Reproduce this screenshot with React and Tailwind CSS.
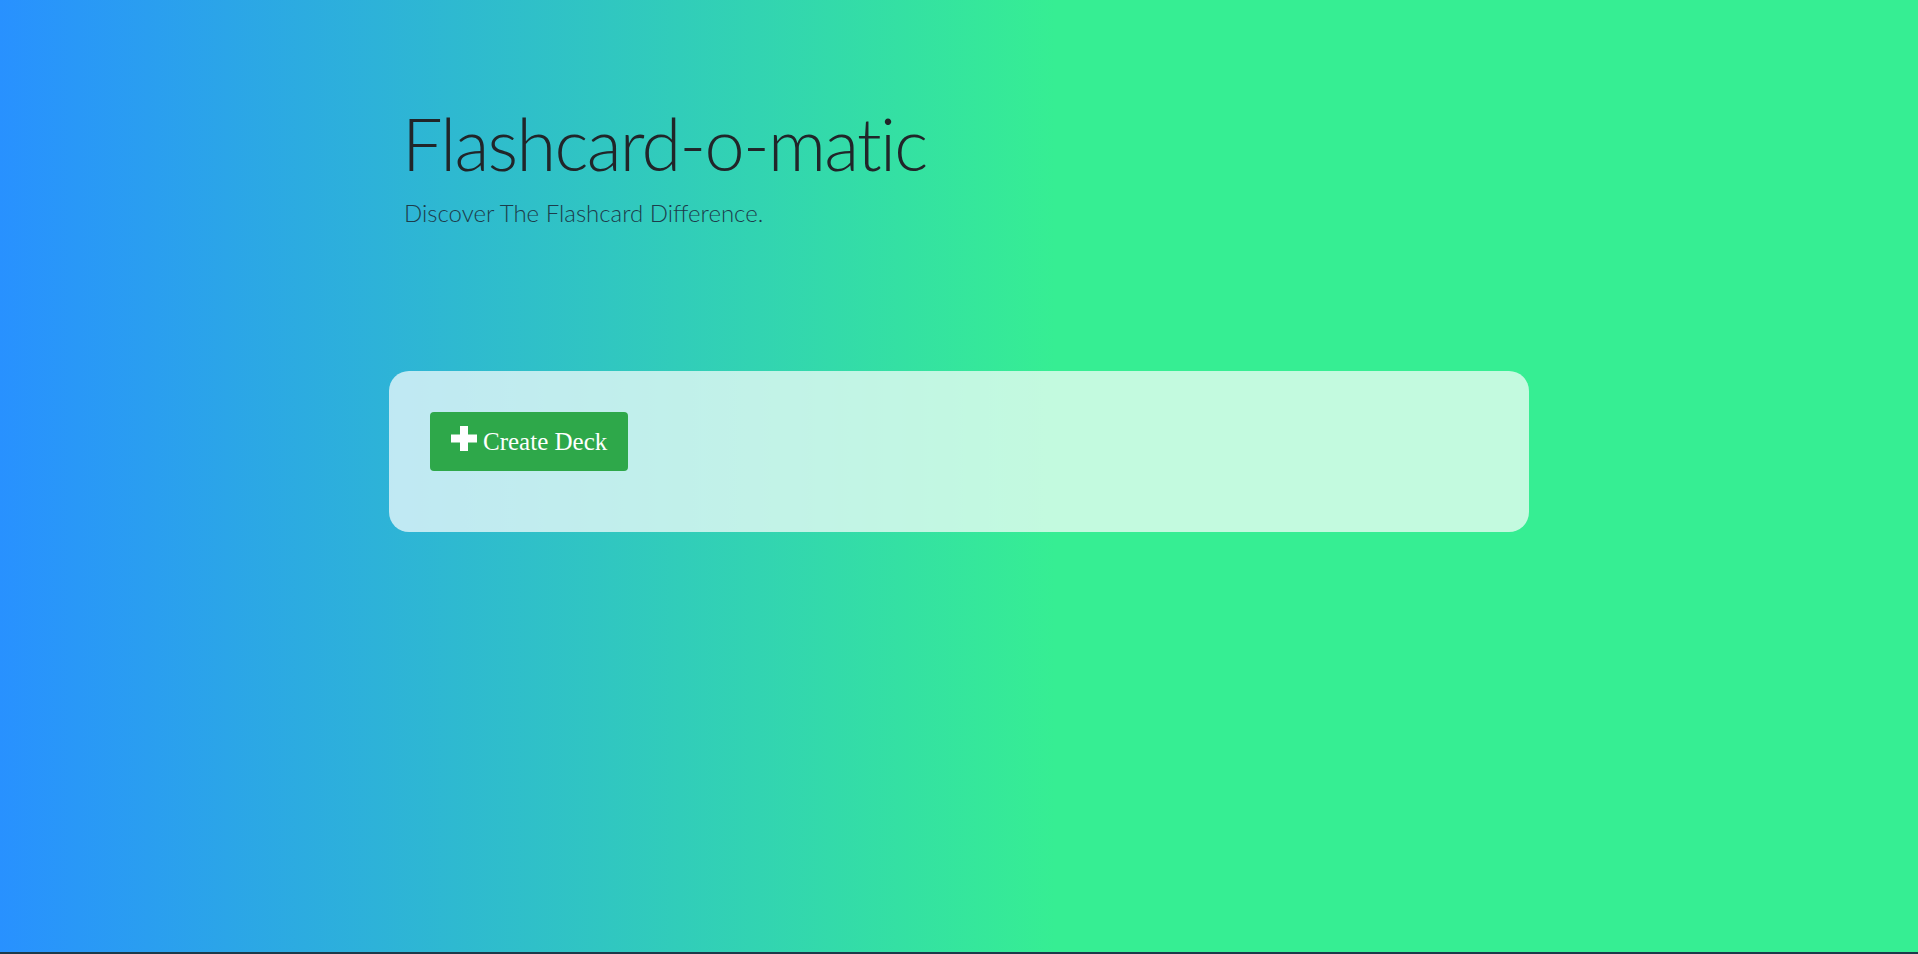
import React from "react";

const PlusIcon = () => (
  <svg width="26" height="25" viewBox="0 0 26 25" className="shrink-0 mb-[6px]">
    <path d="M9 0h8v8.5h9v8h-9V25H9v-8.5H0v-8h9z" fill="#fff" />
  </svg>
);

const Header = () => (
  <header className="w-[1140px] mx-auto px-[15px] pt-[100px]">
    <h1
      className="text-[72px] leading-[1.2] font-light tracking-[-1.7px] -ml-[2px] text-[#212529]"
      style={{ fontFamily: "Lato, sans-serif" }}
    >
      Flashcard-o-matic
    </h1>
    <p
      className="text-[24px] leading-[1.5] font-light text-[#1d3c4b] mt-[9px]"
      style={{ fontFamily: "Lato, sans-serif" }}
    >
      Discover The Flashcard Difference.
    </p>
  </header>
);

export default function App() {
  return (
    <div className="min-h-[954px] flex flex-col bg-[#1c3a4a]">
      <div className="h-[952px] bg-[linear-gradient(to_right,#2891ff_0%,#36ee93_55%,#36ee93_100%)]">
        <Header />
        <main className="w-[1140px] mx-auto mt-[140px] rounded-[20px] bg-white/70 pt-[41px] pb-[61px] px-[41px]">
          <button
            type="button"
            className="flex items-center gap-[6px] h-[59px] px-[21px] rounded-[4px] bg-[#2ea84a] text-white text-[25px]"
            style={{ fontFamily: "'Liberation Serif', serif" }}
          >
            <PlusIcon />
            <span>Create Deck</span>
          </button>
        </main>
      </div>
    </div>
  );
}
